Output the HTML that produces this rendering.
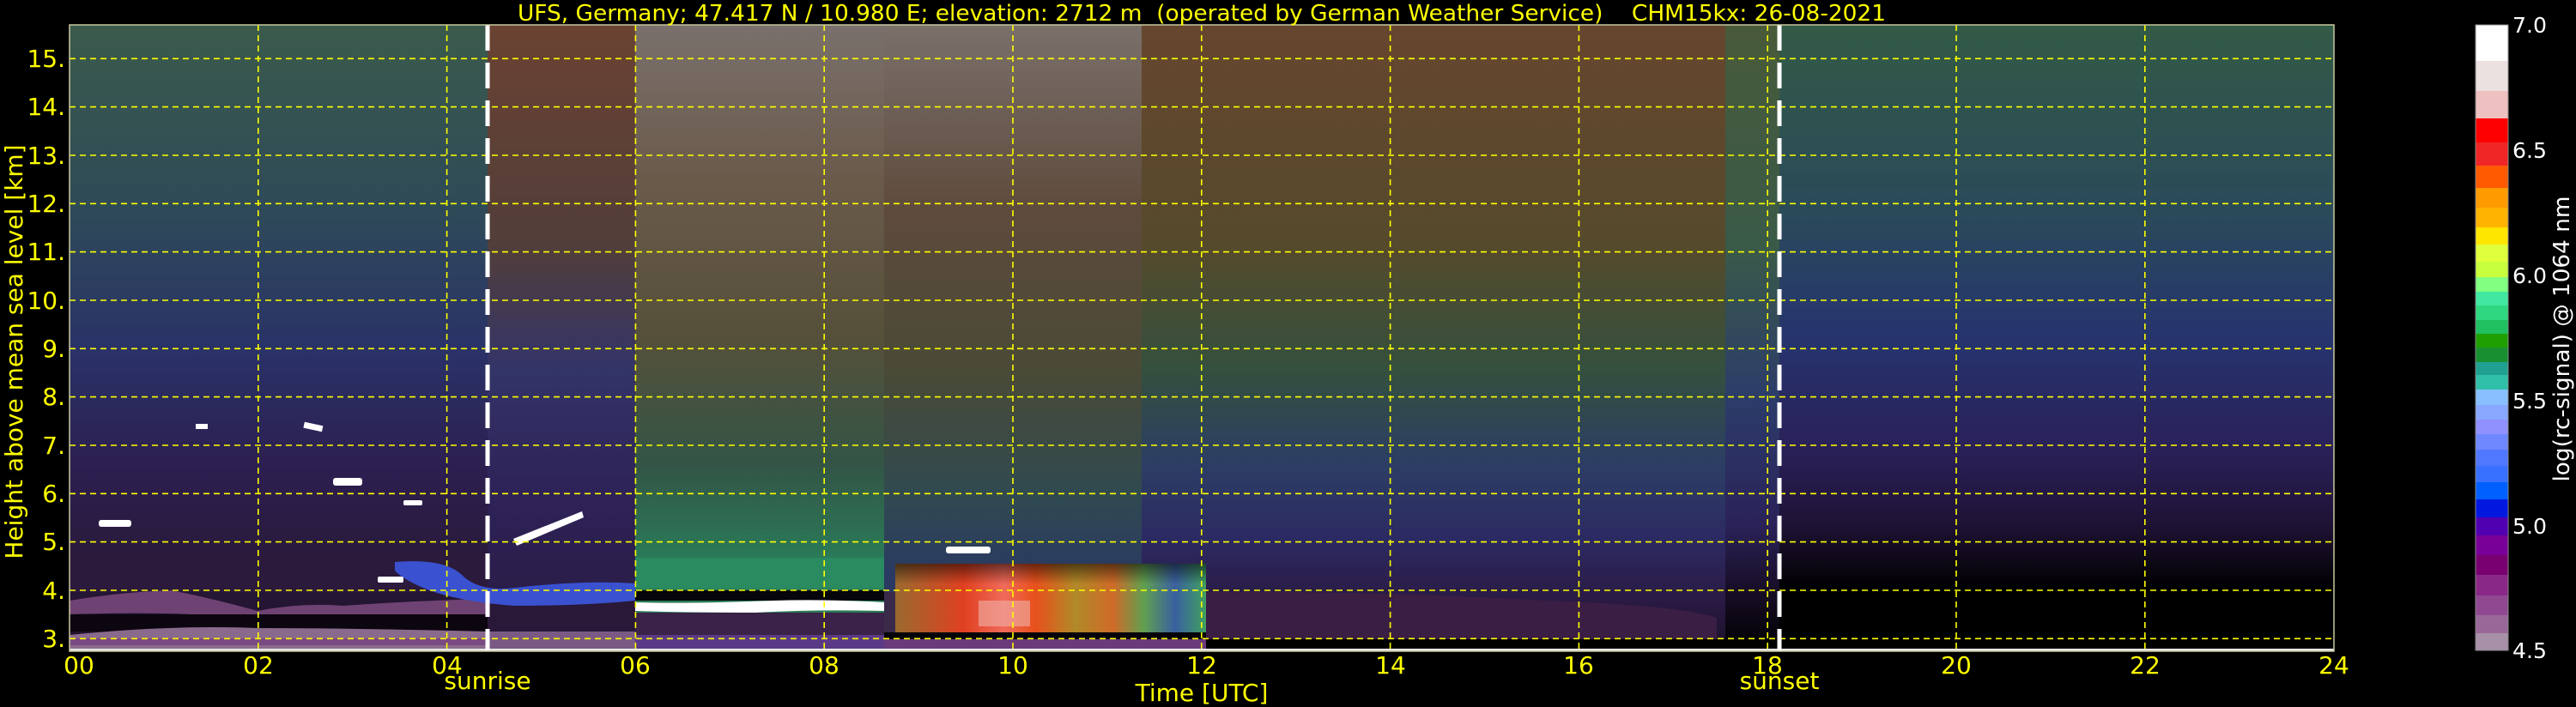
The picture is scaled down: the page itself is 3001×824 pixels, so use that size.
<!DOCTYPE html>
<html><head><meta charset="utf-8"><style>
html,body{margin:0;padding:0;background:#000;width:3001px;height:824px;overflow:hidden}
svg{display:block}
text{font-family:"DejaVu Sans","Liberation Sans",sans-serif}
</style></head><body>
<svg width="3001" height="824" viewBox="0 0 3001 824" xmlns="http://www.w3.org/2000/svg">
<defs>
<linearGradient id="gA" x1="0" y1="29" x2="0" y2="759" gradientUnits="userSpaceOnUse">
<stop offset="0" stop-color="#3b5a4c"/><stop offset="0.3" stop-color="#2e4a58"/><stop offset="0.52" stop-color="#2a3268"/><stop offset="0.72" stop-color="#2c1e4e"/><stop offset="0.85" stop-color="#2a1a3c"/><stop offset="1" stop-color="#1e1028"/></linearGradient>
<linearGradient id="gB" x1="0" y1="29" x2="0" y2="759" gradientUnits="userSpaceOnUse">
<stop offset="0" stop-color="#6a4232"/><stop offset="0.35" stop-color="#523e3a"/><stop offset="0.55" stop-color="#333468"/><stop offset="0.75" stop-color="#2e2258"/><stop offset="1" stop-color="#281a40"/></linearGradient>
<linearGradient id="gC" x1="0" y1="29" x2="0" y2="759" gradientUnits="userSpaceOnUse">
<stop offset="0" stop-color="#7a706c"/><stop offset="0.25" stop-color="#6a5a4a"/><stop offset="0.5" stop-color="#55503a"/><stop offset="0.7" stop-color="#345446"/><stop offset="0.85" stop-color="#2a7a58"/><stop offset="1" stop-color="#2a7a58"/></linearGradient>
<linearGradient id="gD" x1="0" y1="29" x2="0" y2="759" gradientUnits="userSpaceOnUse">
<stop offset="0" stop-color="#7a706a"/><stop offset="0.3" stop-color="#5e4a3c"/><stop offset="0.55" stop-color="#4a4a36"/><stop offset="0.75" stop-color="#304a50"/><stop offset="0.88" stop-color="#2a3a62"/><stop offset="1" stop-color="#2a3060"/></linearGradient>
<linearGradient id="gE" x1="0" y1="29" x2="0" y2="759" gradientUnits="userSpaceOnUse">
<stop offset="0" stop-color="#66462e"/><stop offset="0.35" stop-color="#564a2c"/><stop offset="0.55" stop-color="#34503e"/><stop offset="0.7" stop-color="#2c3e64"/><stop offset="0.82" stop-color="#2c2a62"/><stop offset="0.92" stop-color="#2a1a44"/><stop offset="1" stop-color="#1a1028"/></linearGradient>
<linearGradient id="gF" x1="0" y1="29" x2="0" y2="759" gradientUnits="userSpaceOnUse">
<stop offset="0" stop-color="#485a3a"/><stop offset="0.35" stop-color="#3a5a48"/><stop offset="0.6" stop-color="#2c3c6a"/><stop offset="0.8" stop-color="#2a2258"/><stop offset="0.9" stop-color="#180e28"/><stop offset="1" stop-color="#000"/></linearGradient>
<linearGradient id="gG" x1="0" y1="29" x2="0" y2="759" gradientUnits="userSpaceOnUse">
<stop offset="0" stop-color="#325a46"/><stop offset="0.3" stop-color="#2a4a5a"/><stop offset="0.5" stop-color="#26346e"/><stop offset="0.68" stop-color="#2a2058"/><stop offset="0.8" stop-color="#1e1234"/><stop offset="0.87" stop-color="#0a0610"/><stop offset="0.9" stop-color="#000"/><stop offset="1" stop-color="#000"/></linearGradient>
<linearGradient id="bars" x1="1043" y1="0" x2="1405" y2="0" gradientUnits="userSpaceOnUse">
<stop offset="0" stop-color="#9a6a30"/><stop offset="0.22" stop-color="#e04020"/><stop offset="0.35" stop-color="#f06a5a"/><stop offset="0.45" stop-color="#e8501c"/><stop offset="0.58" stop-color="#b08a28"/><stop offset="0.7" stop-color="#d06a28"/><stop offset="0.8" stop-color="#60a050"/><stop offset="0.9" stop-color="#3a60a0"/><stop offset="1" stop-color="#40a060"/></linearGradient>
<linearGradient id="barsV" x1="0" y1="657" x2="0" y2="737" gradientUnits="userSpaceOnUse">
<stop offset="0" stop-color="#000" stop-opacity="0.55"/><stop offset="0.3" stop-color="#000" stop-opacity="0"/><stop offset="1" stop-color="#000" stop-opacity="0"/></linearGradient>
</defs>

<rect x="81" y="29" width="487" height="730" fill="url(#gA)"/>
<rect x="568" y="29" width="172" height="730" fill="url(#gB)"/>
<rect x="740" y="29" width="290" height="730" fill="url(#gC)"/>
<rect x="1030" y="29" width="300" height="730" fill="url(#gD)"/>
<rect x="1330" y="29" width="680" height="730" fill="url(#gE)"/>
<rect x="2010" y="29" width="63" height="730" fill="url(#gF)"/>
<rect x="2073" y="29" width="646" height="730" fill="url(#gG)"/>

<rect x="81" y="640" width="487" height="50" fill="#2c1a3c"/>
<path d="M81 700 Q140 690 200 688 Q250 698 300 712 Q350 702 400 706 Q480 700 568 698 L568 716 Q480 716 400 718 Q330 716 280 720 Q200 712 81 716 Z" fill="#6e4272"/>
<rect x="81" y="716" width="487" height="20" fill="#0c0610"/>
<path d="M81 740 Q200 728 300 732 Q400 732 568 736 L568 756 L81 756 Z" fill="#8a6a8c"/>
<rect x="81" y="744" width="487" height="8" fill="#7a4a82"/>
<rect x="568" y="700" width="172" height="36" fill="#2a1838"/>
<rect x="568" y="736" width="172" height="20" fill="#7a5a84"/>
<path d="M460 655 Q520 650 540 672 Q560 690 600 685 Q680 676 740 680 L740 700 Q680 706 600 706 Q540 702 500 688 Q470 676 460 665 Z" fill="#3a52d0"/>
<rect x="740" y="650" width="290" height="36" fill="#2a8a60"/>
<rect x="740" y="688" width="290" height="12" fill="#05050a"/>
<path d="M740 702 Q800 704 900 700 Q960 698 1030 702 L1030 712 Q950 710 880 714 Q800 714 740 712 Z" fill="#ffffff"/>
<rect x="740" y="714" width="290" height="26" fill="#3a2248"/>
<rect x="740" y="740" width="290" height="17" fill="#5a3a86"/>
<rect x="1030" y="690" width="13" height="50" fill="#3a2a4a"/>
<rect x="1043" y="657" width="362" height="80" fill="url(#bars)"/>
<rect x="1043" y="657" width="362" height="80" fill="url(#barsV)"/>
<rect x="1140" y="700" width="60" height="30" fill="#f0b0a8" opacity="0.6"/>
<rect x="1030" y="737" width="375" height="8" fill="#050308"/>
<rect x="1030" y="745" width="375" height="12" fill="#6a3a7a"/>
<path d="M1405 690 Q1600 688 1800 700 Q1950 705 2000 720 L2000 745 L1405 745 Z" fill="#3a1e44"/>
<rect x="1405" y="745" width="668" height="12" fill="#000"/>
<rect x="2073" y="700" width="646" height="57" fill="#000"/>

<g fill="#fff">
<rect x="115" y="606" width="38" height="8" rx="3"/>
<rect x="228" y="494" width="14" height="6"/>
<rect x="354" y="494" width="22" height="7" transform="rotate(12 365 497)"/>
<rect x="388" y="557" width="34" height="9" rx="3"/>
<rect x="470" y="583" width="22" height="6" rx="2"/>
<rect x="440" y="672" width="30" height="7" rx="2"/>
<path d="M598 628 L678 596 L680 603 L602 636 Z"/>
<rect x="1102" y="637" width="52" height="8" rx="3"/>
</g>

<rect x="81" y="756" width="2638" height="3" fill="#e8e8e8"/>

<g stroke="#ffff00" stroke-width="1.6" stroke-dasharray="7,5" fill="none">
<path d="M81 744.3H2719M81 688H2719M81 631.6H2719M81 575.3H2719M81 519H2719M81 462.6H2719M81 406.3H2719M81 350H2719M81 293.6H2719M81 237.3H2719M81 181H2719M81 124.6H2719M81 68.3H2719"/>
<path d="M300.8 29V759M520.6 29V759M740.4 29V759M960.2 29V759M1180 29V759M1399.8 29V759M1619.6 29V759M1839.4 29V759M2059.2 29V759M2279 29V759M2498.8 29V759"/>
</g>
<g stroke="#fff" stroke-width="5" stroke-dasharray="30,14" fill="none">
<path d="M568 29V759M2073 29V759"/>
</g>
<rect x="81" y="29" width="2638" height="730" fill="none" stroke="#c8c8a0" stroke-width="1.5"/>

<text x="603" y="24" font-size="26" fill="#ffff00" textLength="1594" lengthAdjust="spacingAndGlyphs">UFS, Germany; 47.417 N / 10.980 E; elevation: 2712 m&#160; (operated by German Weather Service)&#160;&#160;&#160;&#160;CHM15kx: 26-08-2021</text>

<g font-size="28" fill="#ffff00" text-anchor="end">
<text x="76" y="754">3.</text><text x="76" y="698">4.</text><text x="76" y="641">5.</text><text x="76" y="585">6.</text><text x="76" y="529">7.</text><text x="76" y="472">8.</text><text x="76" y="416">9.</text><text x="76" y="360">10.</text><text x="76" y="303">11.</text><text x="76" y="247">12.</text><text x="76" y="191">13.</text><text x="76" y="134">14.</text><text x="76" y="78">15.</text>
</g>
<text transform="translate(26 410) rotate(-90)" font-size="28" fill="#ffff00" text-anchor="middle">Height above mean sea level [km]</text>

<g font-size="28" fill="#ffff00" text-anchor="middle">
<text x="92" y="785">00</text><text x="301" y="785">02</text><text x="521" y="785">04</text><text x="740" y="785">06</text><text x="960" y="785">08</text><text x="1180" y="785">10</text><text x="1400" y="785">12</text><text x="1620" y="785">14</text><text x="1839" y="785">16</text><text x="2059" y="785">18</text><text x="2279" y="785">20</text><text x="2499" y="785">22</text><text x="2719" y="785">24</text>
<text x="568" y="803">sunrise</text><text x="2073" y="803">sunset</text>
<text x="1400" y="817">Time [UTC]</text>
</g>

<g>
<rect x="2884" y="29" width="38" height="42" fill="#ffffff"/>
<rect x="2884" y="71" width="38" height="35" fill="#ebe1e1"/>
<rect x="2884" y="106" width="38" height="32" fill="#eec0c0"/>
<rect x="2884" y="138" width="38" height="28" fill="#ff0000"/>
<rect x="2884" y="166" width="38" height="27" fill="#f02626"/>
<rect x="2884" y="193" width="38" height="26" fill="#ff5a00"/>
<rect x="2884" y="219" width="38" height="23" fill="#ff9a00"/>
<rect x="2884" y="242" width="38" height="23" fill="#ffb400"/>
<rect x="2884" y="265" width="38" height="20" fill="#ffe600"/>
<rect x="2884" y="285" width="38" height="20" fill="#e0ff3c"/>
<rect x="2884" y="305" width="38" height="18" fill="#c8ff3c"/>
<rect x="2884" y="323" width="38" height="17" fill="#80ff80"/>
<rect x="2884" y="340" width="38" height="16" fill="#40e8a0"/>
<rect x="2884" y="356" width="38" height="17" fill="#2ed880"/>
<rect x="2884" y="373" width="38" height="16" fill="#20c060"/>
<rect x="2884" y="389" width="38" height="16" fill="#20a000"/>
<rect x="2884" y="405" width="38" height="17" fill="#189030"/>
<rect x="2884" y="422" width="38" height="15" fill="#20a090"/>
<rect x="2884" y="437" width="38" height="17" fill="#30c0a8"/>
<rect x="2884" y="454" width="38" height="18" fill="#88c0ff"/>
<rect x="2884" y="472" width="38" height="17" fill="#88a8ff"/>
<rect x="2884" y="489" width="38" height="17" fill="#9090ff"/>
<rect x="2884" y="506" width="38" height="18" fill="#7088ff"/>
<rect x="2884" y="524" width="38" height="19" fill="#5078ff"/>
<rect x="2884" y="543" width="38" height="19" fill="#3870ff"/>
<rect x="2884" y="562" width="38" height="20" fill="#0060ff"/>
<rect x="2884" y="582" width="38" height="21" fill="#0018e0"/>
<rect x="2884" y="603" width="38" height="21" fill="#5000b0"/>
<rect x="2884" y="624" width="38" height="23" fill="#780098"/>
<rect x="2884" y="647" width="38" height="23" fill="#780070"/>
<rect x="2884" y="670" width="38" height="24" fill="#8a2888"/>
<rect x="2884" y="694" width="38" height="23" fill="#904890"/>
<rect x="2884" y="717" width="38" height="21" fill="#9a6898"/>
<rect x="2884" y="738" width="38" height="20" fill="#a890a8"/>
<rect x="2884" y="29" width="38" height="729" fill="none" stroke="#888" stroke-width="1"/>
</g>
<g font-size="25" fill="#ffffff">
<text x="2927" y="38" textLength="40" lengthAdjust="spacingAndGlyphs">7.0</text><text x="2927" y="184" textLength="40" lengthAdjust="spacingAndGlyphs">6.5</text><text x="2927" y="330" textLength="40" lengthAdjust="spacingAndGlyphs">6.0</text><text x="2927" y="476" textLength="40" lengthAdjust="spacingAndGlyphs">5.5</text><text x="2927" y="622" textLength="40" lengthAdjust="spacingAndGlyphs">5.0</text><text x="2927" y="767" textLength="40" lengthAdjust="spacingAndGlyphs">4.5</text>
</g>
<text transform="translate(2993 395) rotate(-90)" font-size="26" fill="#ffffff" text-anchor="middle" textLength="333" lengthAdjust="spacingAndGlyphs">log(rc-signal) @ 1064 nm</text>
</svg>
</body></html>
